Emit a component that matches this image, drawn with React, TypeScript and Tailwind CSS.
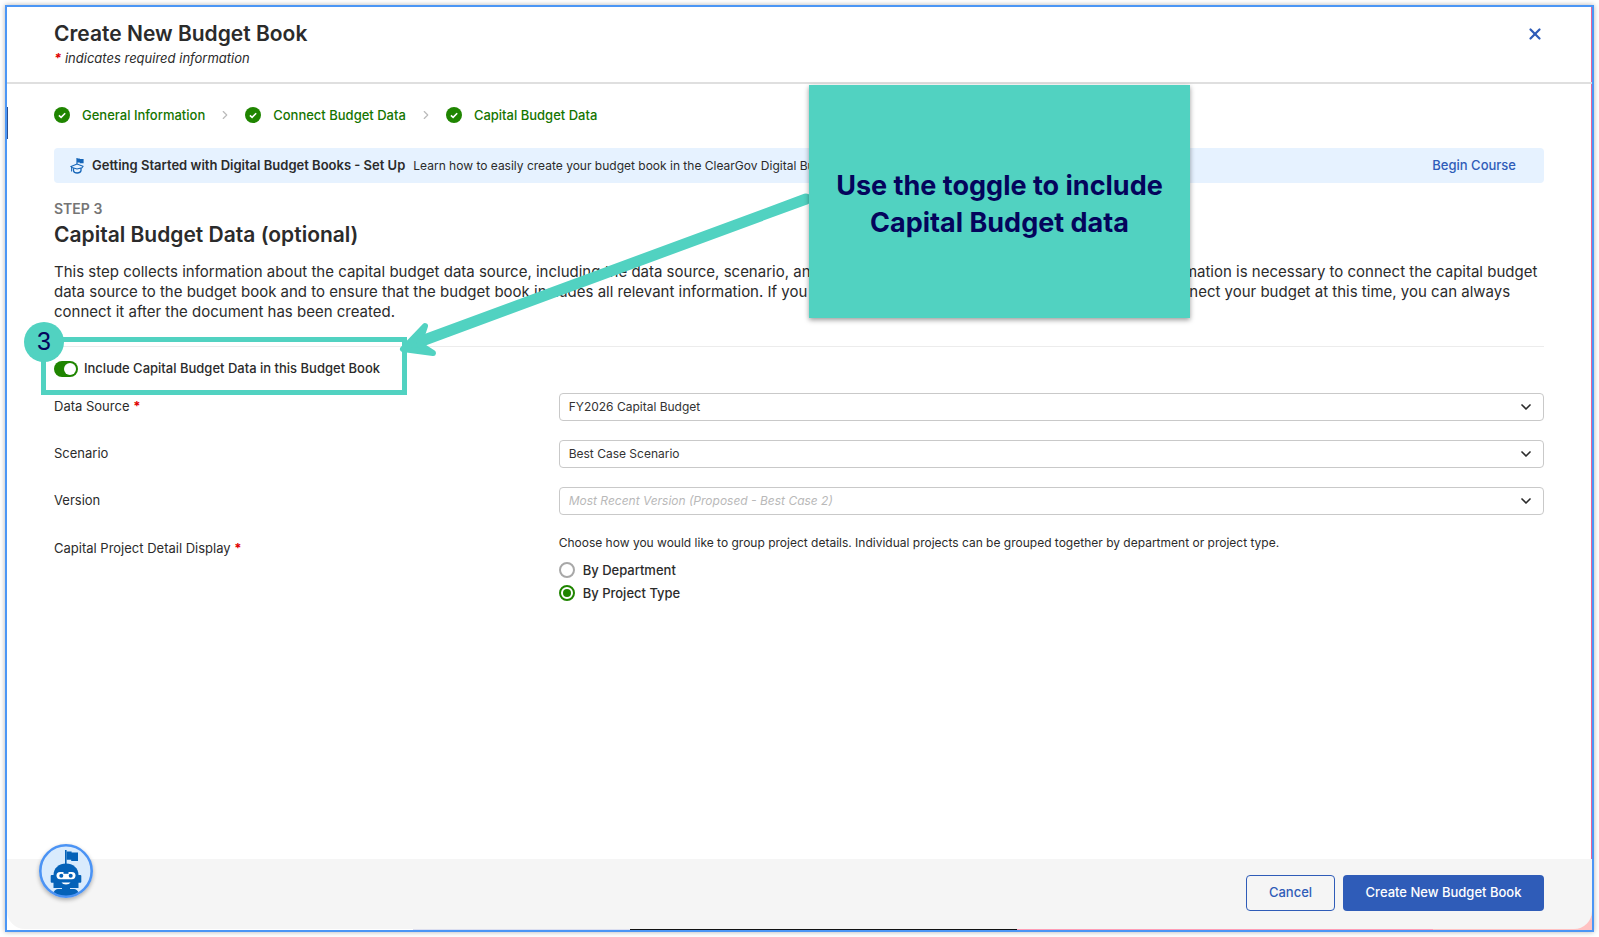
import { useState } from "react";
import { ChevronDown, ChevronRight, X } from "lucide-react";

interface SelectFieldProps {
  id: string;
  label: string;
  required?: boolean;
  placeholder?: boolean;
  options: string[];
}

const steps = ["General Information", "Connect Budget Data", "Capital Budget Data"];

const groupings = ["By Department", "By Project Type"];

const Required = () => <span className="text-[#e00000] font-bold">*</span>;

const CheckBadge = () => (
  <svg viewBox="0 0 16 16" className="size-4 shrink-0" aria-hidden="true">
    <circle cx="8" cy="8" r="8" fill="#1f8500" />
    <path d="M4.9 8.3 7.1 10.3 11.2 6.3" fill="none" stroke="#fff" strokeWidth="1.6" />
  </svg>
);

const CourseIcon = () => (
  <svg viewBox="0 0 16 18" className="w-4 h-[18px] shrink-0" fill="#1565b8" aria-hidden="true">
    <path d="M6.4 1h1.1v6H6.4zM7.5 1.4h2.3V2h3.8v4.200H9.800v-.7H7.5z" />
    <g fill="none" stroke="#1565b8">
      <path d="M1 9.5 7 7l6 2.2-1 1.6L7 12l-5-1.6z" strokeWidth="1.1" />
      <path d="M1.600 10v4.500" strokeWidth="1" />
      <path d="M3.500 11.200v2.600q.6 2.200 3.700 2.200t3.800-2.200V11" strokeWidth="1.3" />
    </g>
  </svg>
);

const RobotIcon = () => (
  <svg viewBox="0 0 54 54" className="size-[54px]" aria-hidden="true">
    <circle cx="27" cy="27" r="25.7" fill="#d9ebfd" />
    <g fill="#0562b8">
      <path d="M26 6h1.6v15H26z" />
      <path d="M27.6 7.5h5v1H39v8.6h-6.800v-1.4h-4.600z" />
      <path d="M14.5 44V31C14.5 24 20 19.5 27 19.5S39.5 24 39.5 31v13z" />
      <rect x="11.7" y="31" width="30.6" height="7.8" rx="1" />
      <path d="M23 43h8v2h4q3 0 4.5 3.5Q34 52.5 27 52.5T14.5 48.5Q16 45 19 45h4z" />
    </g>
    <rect x="17.5" y="28" width="19" height="7.2" rx="3.6" fill="#fff" />
    <path d="M24.5 28h5v1.8h-5z" fill="#0562b8" />
    <circle cx="22.3" cy="31.8" r="2" fill="#0562b8" />
    <circle cx="31.7" cy="31.8" r="2" fill="#0562b8" />
    <path d="M22.5 38.6h9q-1 2-4.5 2t-4.5-2" fill="#fff" />
    <circle cx="27" cy="27" r="25.7" fill="none" stroke="#4b93f4" strokeWidth="2.6" />
  </svg>
);

const SelectField: React.FC<SelectFieldProps> = ({ id, label, required, placeholder, options }) => (
  <div className="grid grid-cols-[1fr_2fr] items-center gap-3">
    <label htmlFor={id} className="text-[13px]">
      {label} {required && <Required />}
    </label>
    <div className="relative">
      <select
        id={id}
        className={
          placeholder
            ? "block w-full h-7 appearance-none rounded-sm border border-[#c9c9c9] bg-white px-[9px] text-[12px] italic text-[#b9b9b9]"
            : "block w-full h-7 appearance-none rounded-sm border border-[#c9c9c9] bg-white px-[9px] text-[12px] text-[#333]"
        }
      >
        {options.map((option) => (
          <option key={option}>{option}</option>
        ))}
      </select>
      <ChevronDown className="pointer-events-none absolute right-2.5 top-1.5 size-4" strokeWidth={2.5} />
    </div>
  </div>
);

const App = () => {
  const [included, setIncluded] = useState(true);
  const [grouping, setGrouping] = useState("By Project Type");

  return (
    <div className="h-screen p-[5px] bg-white font-['Inter',sans-serif] text-[#2b2b2b]">
      <div className="relative flex h-full flex-col border-2 border-[#4b96f5] bg-white shadow-[0_0_5px_rgba(0,0,0,0.3),inset_-1px_0_0_#e8629a]">
        {/* Sliver of the page underneath */}
        <span className="absolute left-0 top-[100px] h-8 w-px bg-[#2c4f8f]" />

        {/* Header */}
        <header className="flex items-start justify-between border-b-2 border-[#dfdfdf] pl-[47px] pr-12 pt-[13px] pb-3.5">
          <div>
            <h1 className="text-[21px] leading-7 font-semibold">Create New Budget Book</h1>
            <p className="text-[13px] leading-5 italic">
              <Required /> indicates required information
            </p>
          </div>
          <button type="button" aria-label="Close" className="mt-[5px] text-[#2f5cb8]">
            <X className="size-[18px]" strokeWidth={3} />
          </button>
        </header>

        <main className="relative flex-1 pl-[47px] pr-12 pt-[21px]">
          {/* Steps */}
          <ol className="flex items-center text-[13px] leading-5 font-medium text-[#157500]">
            {steps.map((step, i) => (
              <li key={step} className="flex items-center">
                {i > 0 && <ChevronRight className="mx-[13px] size-3.5 text-[#bbb]" />}
                <CheckBadge />
                <span className="ml-3">{step}</span>
              </li>
            ))}
          </ol>

          {/* Course banner */}
          <div className="mt-[23px] flex h-[35px] items-center rounded-sm bg-[#e6f2ff] pl-4 pr-7 text-[13px]">
            <CourseIcon />
            <strong className="ml-1.5 font-semibold">Getting Started with Digital Budget Books - Set Up</strong>
            <span className="ml-2 text-[12px]">
              Learn how to easily create your budget book in the ClearGov Digital Budget Book course
            </span>
            <a href="#course" className="ml-auto font-medium text-[#2f5cb8]">
              Begin Course
            </a>
          </div>

          <p className="mt-4 text-[14px] leading-5 font-semibold text-[#757575]">STEP 3</p>
          <h2 className="mt-px text-[21px] leading-[30px] font-semibold">Capital Budget Data (optional)</h2>
          <p className="mt-3 text-[15px] leading-5">
            This step collects information about the capital budget data source, including the data source, scenario, and
            version of the capital budget data in use. This information is necessary to connect the capital budget
            <br />
            data source to the budget book and to ensure that the budget book includes all relevant information. If you do
            not have all of this information or prefer not to connect your budget at this time, you can always
            <br />
            connect it after the document has been created.
          </p>

          <form className="mt-6 border-t border-[#ececec] pt-3">
            <div className="relative flex h-5 items-center gap-1.5">
              <input
                id="include"
                type="checkbox"
                role="switch"
                checked={included}
                onChange={() => setIncluded(!included)}
                className="flex h-4 w-6 appearance-none items-center rounded-full bg-[#999] p-0.5 before:size-3 before:rounded-full before:bg-white checked:justify-end checked:bg-[#1f8500]"
              />
              <label htmlFor="include" className="text-[13px] font-medium">
                Include Capital Budget Data in this Budget Book
              </label>
              {/* Callout frame round the toggle */}
              <div className="pointer-events-none absolute -left-[13px] -top-[22px] h-[58px] w-[366px] border-[5px] border-[#51d2c1]" />
              <span className="absolute -left-[30px] -top-[37px] flex size-10 items-center justify-center rounded-full bg-[#51d2c1] font-['Liberation_Sans',sans-serif] text-[25px] text-[#04045c]">
                3
              </span>
            </div>

            <div className="mt-3.5 flex flex-col gap-[19px]">
              <SelectField id="source" label="Data Source" required options={["FY2026 Capital Budget"]} />
              <SelectField id="scenario" label="Scenario" options={["Best Case Scenario"]} />
              <SelectField id="version" label="Version" placeholder options={["Most Recent Version (Proposed - Best Case 2)"]} />

              <div className="grid grid-cols-[1fr_2fr] gap-3 text-[13px] leading-5" role="radiogroup" aria-labelledby="display">
                <span id="display" className="pt-1">
                  Capital Project Detail Display <Required />
                </span>
                <div>
                  <p className="text-[12px] leading-[18px]">
                    Choose how you would like to group project details. Individual projects can be grouped together by
                    department or project type.
                  </p>
                  <div className="mt-2 flex flex-col gap-[3px]">
                    {groupings.map((name) => (
                      <label key={name} className="flex items-center gap-2 font-medium">
                        <input
                          type="radio"
                          name="grouping"
                          checked={grouping === name}
                          onChange={() => setGrouping(name)}
                          className="flex size-4 appearance-none items-center justify-center rounded-full border-2 border-[#a8a8a8] bg-white before:size-2 before:rounded-full checked:border-[#1f8500] checked:before:bg-[#1f8500]"
                        />
                        {name}
                      </label>
                    ))}
                  </div>
                </div>
              </div>
            </div>
          </form>

          {/* Callout note and its arrow */}
          <svg
            viewBox="0 0 430 170"
            className="pointer-events-none absolute left-[390px] top-[105px] h-[170px] w-[430px]"
            fill="none"
            stroke="#51d2c1"
            strokeLinecap="round"
            strokeLinejoin="round"
            aria-hidden="true"
          >
            <path d="M409 10 22 153" strokeWidth="11" />
            <path d="M28 137 6 160 36 164 22 155z" fill="#51d2c1" strokeWidth="6" />
          </svg>
          <aside className="absolute left-[802px] top-px flex h-[233px] w-[381px] items-center justify-center bg-[#51d2c1] px-5 pt-1 text-center text-[27px] leading-[37px] font-bold text-[#04045c] shadow-[0_2px_5px_rgba(0,0,0,0.4)]">
            Use the toggle to include Capital Budget data
          </aside>
        </main>

        <div className="bg-[linear-gradient(90deg,#fff_25.6%,#dcdff0_25.6%_39.3%,#111_39.3%_63.7%,#ff9db5_63.7%_90%,#ffc2c2_90%)]">
          <footer className="relative mb-px flex justify-end gap-2 rounded-b-[18px] bg-[#f5f5f5] px-12 pt-4 pb-[18px] text-[13px] font-medium">
            <button
              type="button"
              aria-label="Open assistant"
              className="absolute -top-[15px] left-8 rounded-full shadow-[0_2px_4px_rgba(0,0,0,0.3)]"
            >
              <RobotIcon />
            </button>
            <button type="button" className="h-9 w-[89px] rounded-sm border border-[#2f5cb8] text-[#2f5cb8]">
              Cancel
            </button>
            <button type="button" className="h-9 w-[201px] rounded-sm bg-[#2f5cb8] text-white">
              Create New Budget Book
            </button>
          </footer>
        </div>
      </div>
    </div>
  );
};

export default App;
